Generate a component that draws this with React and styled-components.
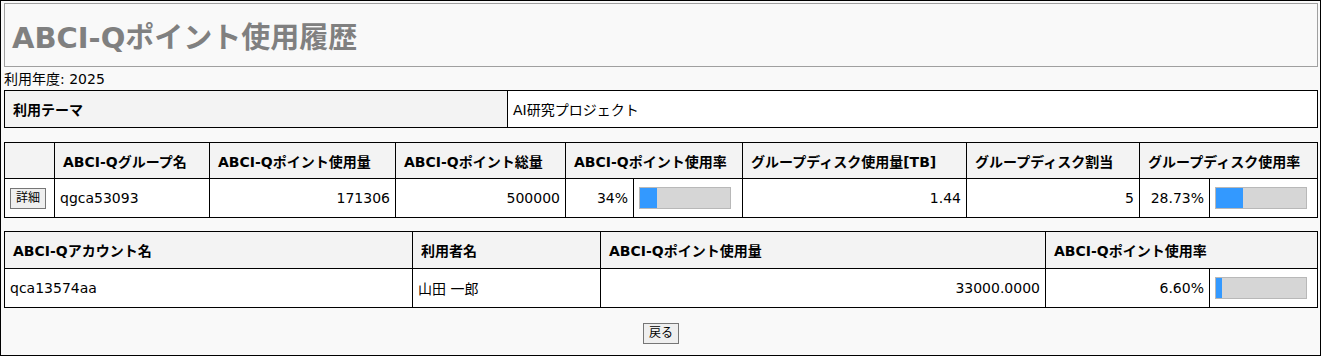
import React from 'react';
import styled, { createGlobalStyle } from 'styled-components';

const GlobalStyle = createGlobalStyle`
  body {
    margin: 0;
    font-family: "DejaVu Sans", Verdana, "Noto Sans CJK JP", sans-serif;
    color: #000;
  }
`;

const Page = styled.div`
  width: 1321px;
  height: 356px;
  box-sizing: border-box;
  border: 1px solid #000;
  background-color: #f9f9f9;
  padding: 2px 2px 0 3px;
`;

const TitleBox = styled.div`
  height: 64px;
  box-sizing: border-box;
  border: 1px solid #a0a0a0;
  display: flex;
  align-items: center;
  padding: 0 7px;
`;

const Title = styled.h1`
  margin: 0;
  font-size: 29px;
  font-weight: bold;
  color: #808080;
`;

const YearLine = styled.div`
  font-size: 14px;
  line-height: 20px;
  margin: 2px 0 1px;
`;

const DataTable = styled.table`
  width: 100%;
  border-collapse: collapse;
  table-layout: fixed;
  background-color: #fff;
  margin-bottom: ${(p) => p.$gap ?? 14}px;
`;

const Row = styled.tr`
  height: ${(p) => p.$h || 37}px;
`;

const HeadCell = styled.th`
  background-color: #f3f3f3;
  border: 1px solid #000;
  padding: 0 8px;
  text-align: left;
  font-size: 14px;
  font-weight: bold;
  white-space: nowrap;
`;

const Cell = styled.td`
  border: 1px solid #000;
  padding: 0 5px;
  font-size: 14px;
  text-align: ${(p) => p.$align || 'left'};
  white-space: nowrap;
`;

const SmallButton = styled.button`
  height: 21px;
  box-sizing: border-box;
  padding: 0 5px;
  font-family: inherit;
  font-size: 12px;
  line-height: 17px;
  background-color: #efefef;
  border: 1px solid #767676;
  border-radius: 0;
  color: #000;
  cursor: pointer;
  vertical-align: middle;
`;

const Bar = styled.div`
  width: 92px;
  height: 22px;
  box-sizing: border-box;
  border: 1px solid #b8b8b8;
  background-color: #d6d6d6;
`;

const BarFill = styled.div`
  height: 100%;
  background-color: #3399ff;
`;

const Footer = styled.div`
  display: flex;
  justify-content: center;
  padding-top: 1px;
`;

const UsageBar = ({ value }) => (
  <Bar>
    <BarFill style={{ width: `${value}%` }} />
  </Bar>
);

const group = {
  name: 'qgca53093',
  used: '171306',
  total: '500000',
  rate: '34%',
  rateBar: 19,
  diskUsed: '1.44',
  diskQuota: '5',
  diskRate: '28.73%',
  diskBar: 29.6,
};

const accounts = [
  { id: 'qca13574aa', user: '山田 一郎', used: '33000.0000', rate: '6.60%', bar: 6.6 },
];

export default function App() {
  return (
    <>
      <GlobalStyle />
      <Page>
        <TitleBox>
          <Title>ABCI-Qポイント使用履歴</Title>
        </TitleBox>
        <YearLine>利用年度: 2025</YearLine>

        <DataTable>
          <colgroup>
            <col style={{ width: 503 }} />
            <col />
          </colgroup>
          <tbody>
            <Row $h={37}>
              <HeadCell>利用テーマ</HeadCell>
              <Cell>AI研究プロジェクト</Cell>
            </Row>
          </tbody>
        </DataTable>

        <DataTable $gap={13}>
          <colgroup>
            <col style={{ width: 50 }} />
            <col style={{ width: 155 }} />
            <col style={{ width: 186 }} />
            <col style={{ width: 170 }} />
            <col style={{ width: 68 }} />
            <col style={{ width: 109 }} />
            <col style={{ width: 224 }} />
            <col style={{ width: 173 }} />
            <col style={{ width: 70 }} />
            <col />
          </colgroup>
          <thead>
            <Row $h={36}>
              <HeadCell />
              <HeadCell>ABCI-Qグループ名</HeadCell>
              <HeadCell>ABCI-Qポイント使用量</HeadCell>
              <HeadCell>ABCI-Qポイント総量</HeadCell>
              <HeadCell colSpan={2}>ABCI-Qポイント使用率</HeadCell>
              <HeadCell>グループディスク使用量[TB]</HeadCell>
              <HeadCell>グループディスク割当</HeadCell>
              <HeadCell colSpan={2}>グループディスク使用率</HeadCell>
            </Row>
          </thead>
          <tbody>
            <Row $h={39}>
              <Cell>
                <SmallButton>詳細</SmallButton>
              </Cell>
              <Cell>{group.name}</Cell>
              <Cell $align="right">{group.used}</Cell>
              <Cell $align="right">{group.total}</Cell>
              <Cell $align="right">{group.rate}</Cell>
              <Cell>
                <UsageBar value={group.rateBar} />
              </Cell>
              <Cell $align="right">{group.diskUsed}</Cell>
              <Cell $align="right">{group.diskQuota}</Cell>
              <Cell $align="right">{group.diskRate}</Cell>
              <Cell>
                <UsageBar value={group.diskBar} />
              </Cell>
            </Row>
          </tbody>
        </DataTable>

        <DataTable>
          <colgroup>
            <col style={{ width: 408 }} />
            <col style={{ width: 188 }} />
            <col style={{ width: 445 }} />
            <col style={{ width: 164 }} />
            <col />
          </colgroup>
          <thead>
            <Row $h={37}>
              <HeadCell>ABCI-Qアカウント名</HeadCell>
              <HeadCell>利用者名</HeadCell>
              <HeadCell>ABCI-Qポイント使用量</HeadCell>
              <HeadCell colSpan={2}>ABCI-Qポイント使用率</HeadCell>
            </Row>
          </thead>
          <tbody>
            {accounts.map((a) => (
              <Row $h={39} key={a.id}>
                <Cell>{a.id}</Cell>
                <Cell>{a.user}</Cell>
                <Cell $align="right">{a.used}</Cell>
                <Cell $align="right">{a.rate}</Cell>
                <Cell>
                  <UsageBar value={a.bar} />
                </Cell>
              </Row>
            ))}
          </tbody>
        </DataTable>

        <Footer>
          <SmallButton>戻る</SmallButton>
        </Footer>
      </Page>
    </>
  );
}
